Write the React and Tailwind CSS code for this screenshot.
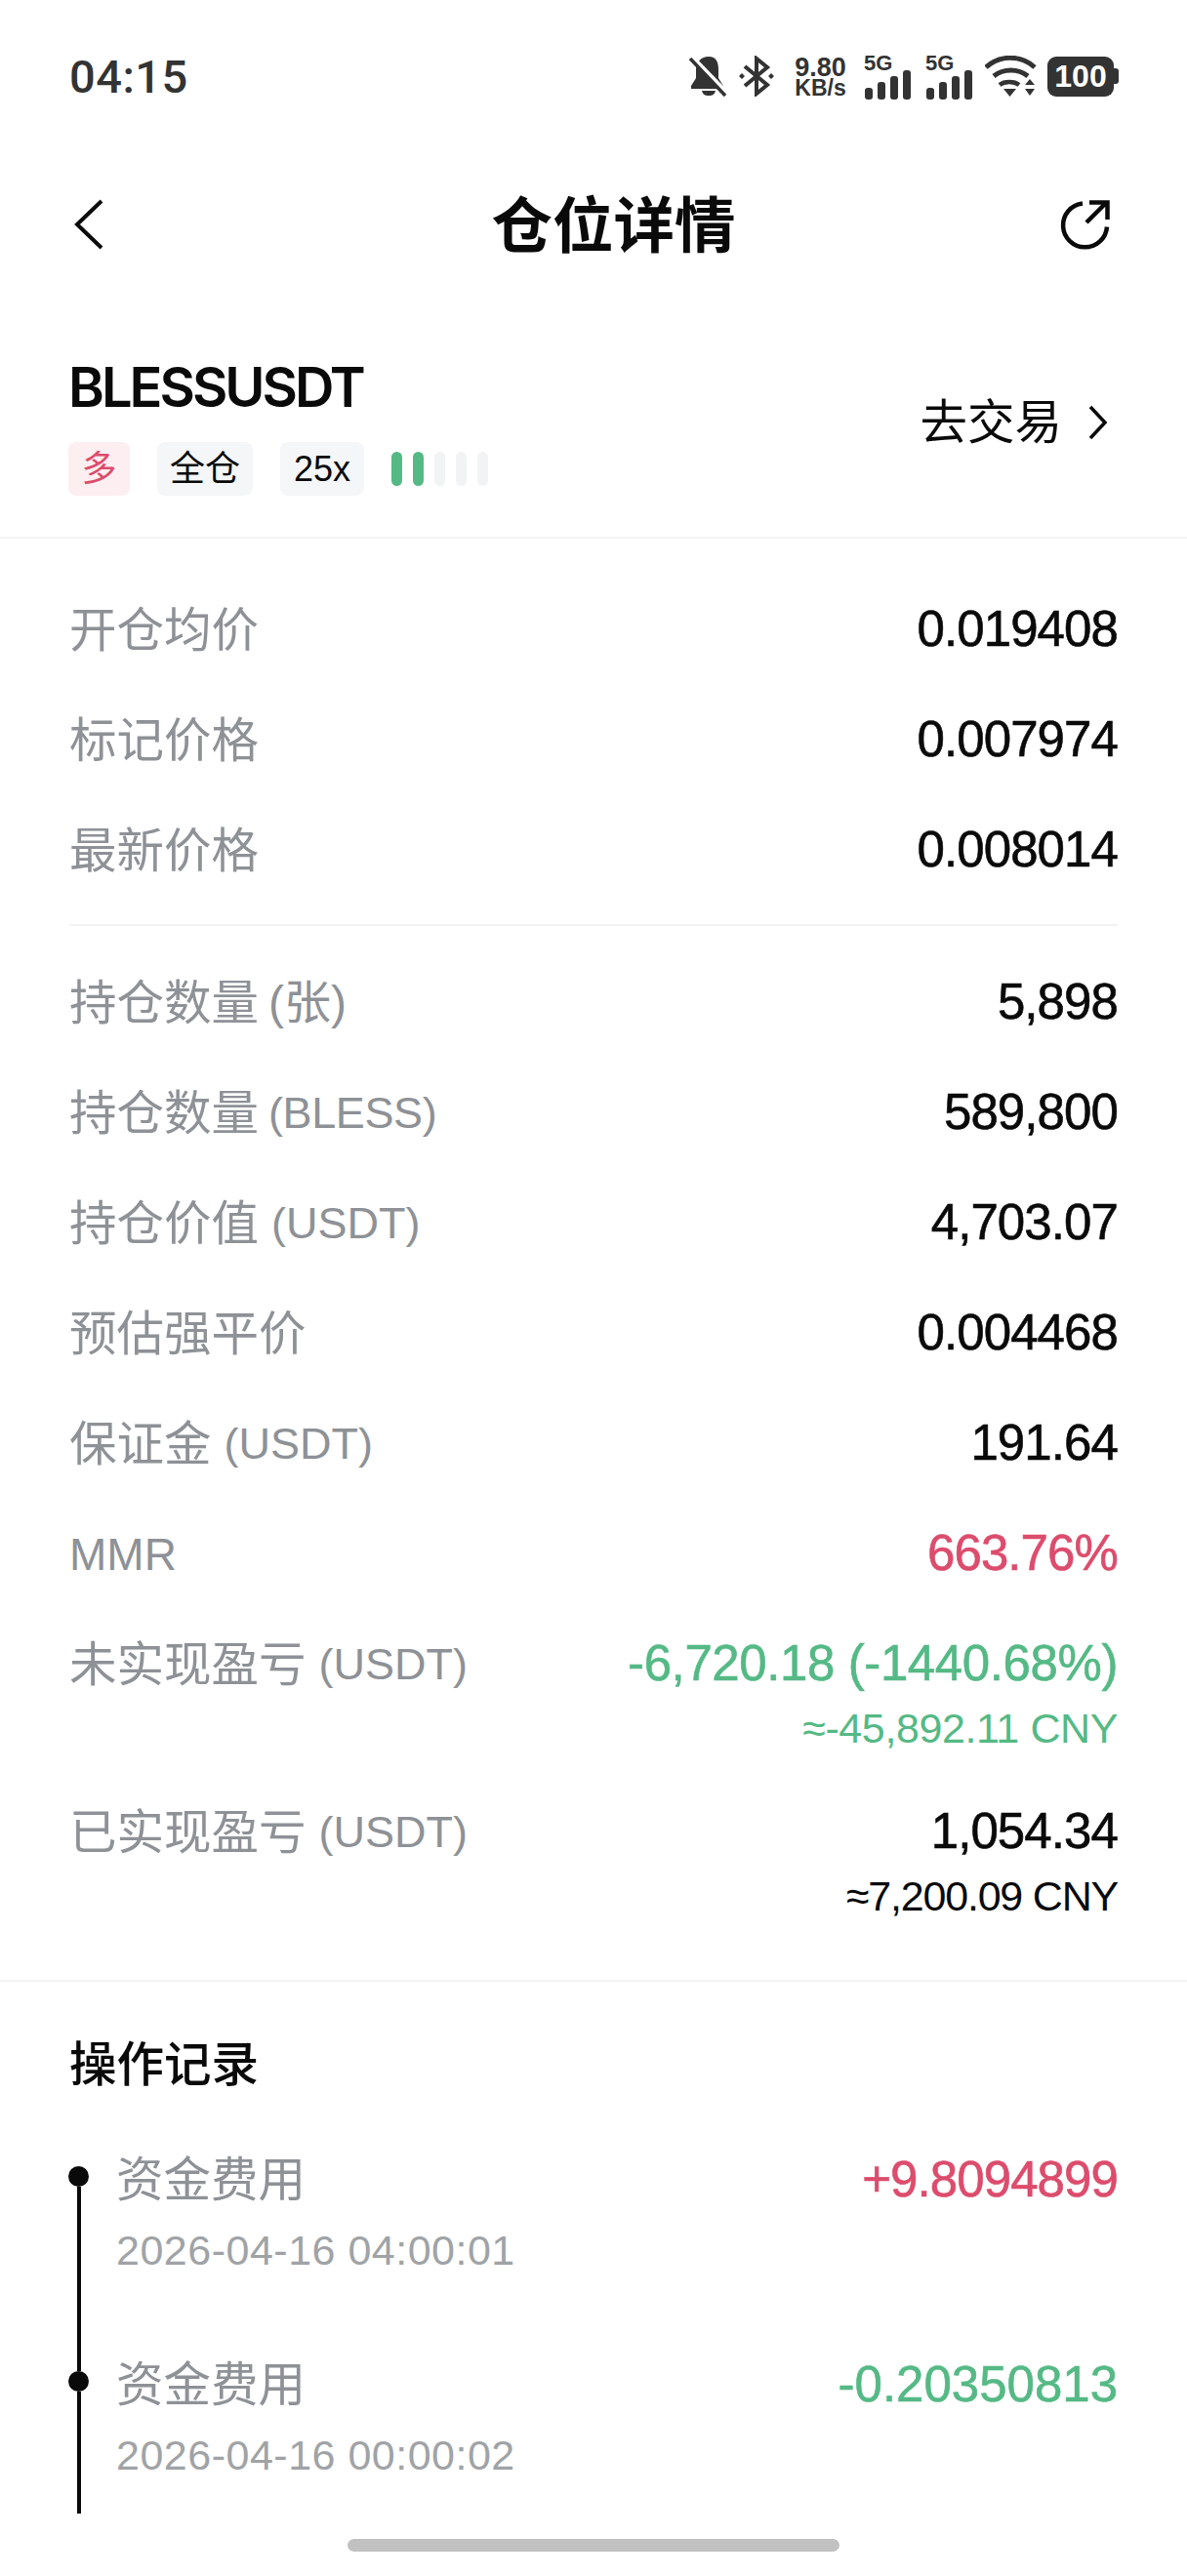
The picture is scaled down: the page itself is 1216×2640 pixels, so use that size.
const priceRows = [
  ["开仓均价", "0.019408"],
  ["标记价格", "0.007974"],
  ["最新价格", "0.008014"],
];

const positionRows = [
  { id: "contracts", label: "持仓数量", value: "5,898", unit: "(张)", unitClass: "text-[48px] ml-[10px]" },
  { id: "coins", label: "持仓数量", value: "589,800", unit: "(BLESS)", unitClass: "text-[45px] ml-[10px] tracking-[-0.4px]" },
  { id: "worth", label: "持仓价值", value: "4,703.07", unit: "(USDT)" },
  { id: "liq", label: "预估强平价", value: "0.004468" },
  { id: "margin", label: "保证金", value: "191.64", unit: "(USDT)" },
];

const records = [
  { time: "2026-04-16 04:00:01", amount: "+9.8094899", color: "text-[#dc4c6c]", height: "h-[210px]", tracking: "tracking-[-0.9px]" },
  { time: "2026-04-16 00:00:02", amount: "-0.20350813", color: "text-[#55b985]", height: "h-[146px]", tracking: "tracking-[0px]" },
];

function BellOff() {
  return (
    <svg width="40" height="42" viewBox="0 0 40 42">
      <path d="M20 1c-8 0-13 6-13 13v9l-5 8v3h33v-3l-5-8v-9C30 7 28 1 20 1z" fill="#333" />
      <path d="M13 36h14c-1 4-3 5-7 5s-6-1-7-5z" fill="#333" />
      <path d="M3 1l37 38" stroke="#fff" strokeWidth="4" />
      <path d="M1 3l36 38" stroke="#333" strokeWidth="3.500" />
    </svg>
  );
}

function BluetoothMark() {
  return (
    <svg width="36" height="42" viewBox="0 0 36 42" fill="none">
      <path d="M6 11l23 19-11 9V3l11 9L6 31" stroke="#333" strokeWidth="4" />
      <path d="M0 21l3-3 3 3-3 3zM30 21l3-3 3 3-3 3z" fill="#333" />
    </svg>
  );
}

function SignalBars() {
  return (
    <div className="flex items-end gap-[5px] h-[30px]">
      <div className="w-[8px] h-[12px] rounded-[3px] bg-[#333]" />
      <div className="w-[8px] h-[18px] rounded-[3px] bg-[#333]" />
      <div className="w-[8px] h-[24px] rounded-[3px] bg-[#333]" />
      <div className="w-[8px] h-[30px] rounded-[3px] bg-[#333]" />
    </div>
  );
}

function Cellular() {
  return (
    <div className="flex flex-col w-[47px] h-[42px] justify-between">
      <span className="font-bold text-[#333] text-[22px] leading-[15px] -ml-[1px]">5G</span>
      <SignalBars />
    </div>
  );
}

function Wifi() {
  return (
    <svg width="53" height="43" viewBox="0 0 53 43" fill="none">
      <path d="M1 12c14-13 36-13 50 0" stroke="#333" strokeWidth="5" />
      <path d="M9 21c10-8 25-8 35 0" stroke="#333" strokeWidth="5" />
      <path d="M15 30c5-4 15-4 20 0" stroke="#333" strokeWidth="4.500" />
      <path d="M19 34h13l-6.500 8zM41 30l5-6 5 6zM41 34h10l-5 7z" fill="#333" />
    </svg>
  );
}

function Battery() {
  return (
    <div className="flex items-center">
      <div className="w-[68px] h-[41px] rounded-[9px] bg-[#333] flex items-center justify-center text-white font-bold text-[32px] leading-none">
        100
      </div>
      <div className="w-[5px] h-[16px] rounded-r-[3px] bg-[#333]" />
    </div>
  );
}

function StatusBar() {
  return (
    <div className="h-[156px] pl-[71px] pr-[70px] flex items-center justify-between">
      <span className="font-['Roboto',sans-serif] font-medium text-[47px] leading-none text-[#333] tracking-[0.5px]">04:15</span>
      <div className="flex items-center h-[42px]">
        <BellOff />
        <div className="ml-[11px]"><BluetoothMark /></div>
        <div className="ml-[21px] w-[53px] flex flex-col items-center text-[#333] font-bold">
          <span className="text-[27px] leading-[24px]">9.80</span>
          <span className="text-[23px] leading-[18px]">KB/s</span>
        </div>
        <div className="ml-[19px]"><Cellular /></div>
        <div className="ml-[16px]"><Cellular /></div>
        <div className="ml-[13px]"><Wifi /></div>
        <div className="ml-[11px]"><Battery /></div>
      </div>
    </div>
  );
}

function Header() {
  return (
    <div className="h-[148px] pl-[72px] pr-[79px] flex items-center justify-between">
      <svg width="30" height="52" viewBox="0 0 30 52" fill="none" className="ml-[4px]">
        <path d="M28 2L3 26l25 24" stroke="#0a0a0a" strokeWidth="4" />
      </svg>
      <h1 className="ml-[66px] mt-[4px] text-[62.500px] leading-none font-bold text-[#0a0a0a]">仓位详情</h1>
      <svg width="52" height="52" viewBox="0 0 52 52" fill="none">
        <path d="M24 4.500a22.500 22.500 0 1 0 25 24" stroke="#0a0a0a" strokeWidth="4.500" />
        <path d="M28 24L48 4M31 3.500h18.500V21" stroke="#0a0a0a" strokeWidth="4.500" />
      </svg>
    </div>
  );
}

function Tag({ className, children }) {
  return (
    <span className={`h-[55px] rounded-[8px] flex items-center justify-center text-[36px] leading-none ${className}`}>
      {children}
    </span>
  );
}

function SymbolInfo() {
  return (
    <div className="h-[248px] pl-[71px] pr-[81px] pt-[65px] flex justify-between items-start border-b-2 border-[#f2f3f5]">
      <div>
        <div className="font-['Inter',sans-serif] text-[56px] leading-[56px] font-semibold tracking-[-3px] -ml-[1px] text-[#0a0a0a]">BLESSUSDT</div>
        <div className="flex items-center mt-[28px] -ml-[1px]">
          <Tag className="w-[63px] bg-[#fdeef1] text-[#dc4c6c]">多</Tag>
          <Tag className="w-[98px] ml-[28px] bg-[#f4f6f7] text-[#0a0a0a]">全仓</Tag>
          <Tag className="w-[86px] ml-[28px] bg-[#f4f6f7] text-[#0a0a0a]">25x</Tag>
          <div className="flex gap-[11px] ml-[28px]">
            <div className="w-[11px] h-[35px] rounded-full bg-[#55b985]" />
            <div className="w-[11px] h-[35px] rounded-full bg-[#55b985]" />
            <div className="w-[11px] h-[35px] rounded-full bg-[#f2f3f5]" />
            <div className="w-[11px] h-[35px] rounded-full bg-[#f2f3f5]" />
            <div className="w-[11px] h-[35px] rounded-full bg-[#f2f3f5]" />
          </div>
        </div>
      </div>
      <div className="flex items-center mt-[39px] text-[48.500px] leading-[50px] text-[#0a0a0a]">
        <span>去交易</span>
        <svg width="20" height="36" viewBox="0 0 20 36" fill="none" className="ml-[27px]">
          <path d="M2 2l15 16L2 34" stroke="#0a0a0a" strokeWidth="3.500" />
        </svg>
      </div>
    </div>
  );
}

function Label({ text, unit, unitClass = "text-[45px] ml-[13px]" }) {
  return (
    <span className="text-[#8e9196] text-[48.500px] leading-[60px] pt-[2px] flex items-center">
      {text}
      {unit && <span className={unitClass}>{unit}</span>}
    </span>
  );
}

function Value({ color, tracking = "tracking-[-0.9px]", children }) {
  return (
    <span className={`text-[51px] leading-[50px] [-webkit-text-stroke:0.6px] ${tracking} ${color}`}>{children}</span>
  );
}

function Row({ label, unit, unitClass, value, color = "text-[#0a0a0a]", tracking }) {
  return (
    <div className="h-[113px] flex items-center justify-between">
      <Label text={label} unit={unit} unitClass={unitClass} />
      <Value color={color} tracking={tracking}>{value}</Value>
    </div>
  );
}

function PnlRow({ label, value, sub, color, tracking, subTracking }) {
  return (
    <div className="h-[172px]">
      <Row label={label} unit="(USDT)" value={value} color={color} tracking={tracking} />
      <div className={`text-right text-[43px] leading-[20px] ${subTracking} ${color}`}>{sub}</div>
    </div>
  );
}

function Details() {
  return (
    <div className="pl-[71px] pr-[71px] pt-[36px] pb-[37px] border-b-2 border-[#f2f3f5]">
      {priceRows.map(([label, value]) => (
        <Row key={label} label={label} value={value} />
      ))}
      <div className="h-[2px] bg-[#f2f3f5] mt-[20px] mb-[21px]" />
      {positionRows.map((row) => (
        <Row key={row.id} label={row.label} unit={row.unit} unitClass={row.unitClass} value={row.value} />
      ))}
      <Row label={<span className="text-[46px]">MMR</span>} value="663.76%" color="text-[#dc4c6c]" />
      <PnlRow
        label="未实现盈亏"
        value="-6,720.18 (-1440.68%)"
        sub="≈-45,892.11 CNY"
        color="text-[#55b985]"
        tracking="tracking-[-0.4px]"
        subTracking="tracking-[-0.4px]"
      />
      <PnlRow
        label="已实现盈亏"
        value="1,054.34"
        sub="≈7,200.09 CNY"
        color="text-[#0a0a0a]"
        subTracking="tracking-[-1.2px]"
      />
    </div>
  );
}

function Records() {
  return (
    <div className="pl-[70px] pr-[71px]">
      <h2 className="text-[48.500px] leading-[60px] font-medium text-[#0a0a0a] mt-[55px] mb-[74px] ml-[1px]">操作记录</h2>
      {records.map((item) => (
        <div key={item.time} className={`flex ${item.height}`}>
          <div className="w-[21px] flex flex-col items-center">
            <div className="w-[21px] h-[21px] rounded-full bg-[#0a0a0a] shrink-0" />
            <div className="w-[4px] grow bg-[#0a0a0a]" />
          </div>
          <div className="ml-[28px] grow -mt-[11px]">
            <div className="flex justify-between">
              <span className="text-[48.500px] leading-[50px] text-[#8e9196]">资金费用</span>
              <Value color={item.color} tracking={item.tracking}>{item.amount}</Value>
            </div>
            <div className="mt-[22px] text-[43px] leading-[50px] tracking-[0.5px] text-[#a0a3a6]">{item.time}</div>
          </div>
        </div>
      ))}
    </div>
  );
}

export default function App() {
  return (
    <div className="w-[1216px] h-[2640px] relative overflow-hidden bg-white font-['Liberation_Sans','Noto_Sans_CJK_SC',sans-serif]">
      <StatusBar />
      <Header />
      <SymbolInfo />
      <Details />
      <Records />
      <div className="absolute left-[356px] bottom-[25px] w-[504px] h-[13px] rounded-full bg-[#c1c1c1]" />
    </div>
  );
}
